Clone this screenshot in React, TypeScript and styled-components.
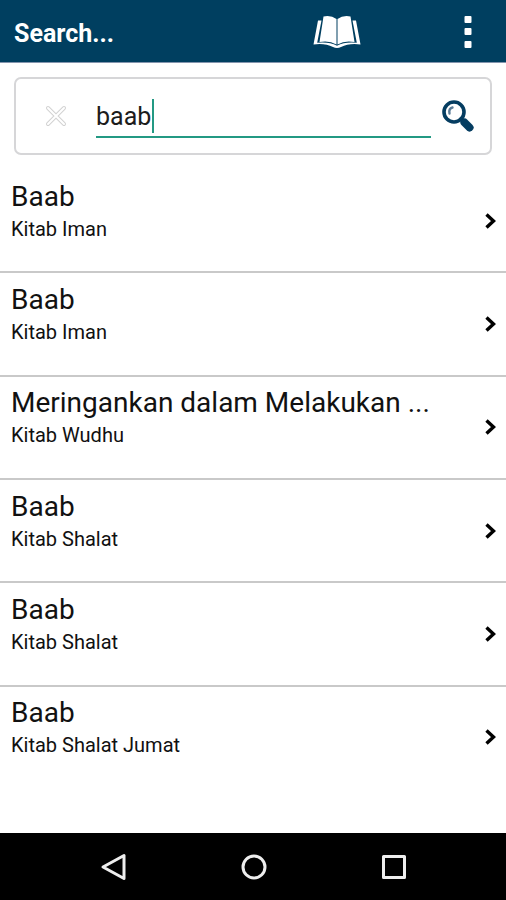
import React, { useState } from "react";
import styled, { createGlobalStyle } from "styled-components";

const GlobalStyle = createGlobalStyle`
  * { box-sizing: border-box; }
  body {
    margin: 0;
    background: #ffffff;
    color: #111111;
    font-family: Roboto, "Liberation Sans", sans-serif;
  }
  button { border: 0; padding: 0; background: none; font: inherit; color: inherit; cursor: pointer; }
  svg { display: block; }
`;

const Screen = styled.div`
  display: flex;
  flex-direction: column;
  min-height: 100vh;
`;

const AppBar = styled.header`
  display: flex;
  align-items: center;
  height: 63px;
  padding: 2px 34px 0 14px;
  background: #003f60;
  border-bottom: 1px solid #8495ae;
  color: #ffffff;
`;

const Title = styled.h1`
  flex: 1;
  margin: 0;
  padding-top: 4px;
  font-size: 25px;
  line-height: 32px;
  font-weight: 700;
`;

const BarActions = styled.div`
  display: flex;
  align-items: center;
  gap: 103px;
`;

const IconButton = styled.button`
  display: grid;
  place-items: center;
  flex: none;
`;

const SearchBox = styled.form`
  display: flex;
  align-items: center;
  height: 78px;
  margin: 14px 14px 15px;
  padding: 0 16px 0 29px;
  border: 2px solid #d6d6d8;
  border-radius: 7px;
`;

const Field = styled.label`
  position: relative;
  flex: 1;
  min-width: 0;
  margin: 1px 11px 0 29px;
`;

const SearchInput = styled.input`
  display: block;
  width: 100%;
  height: 42px;
  padding: 2px 0 0;
  border: 0;
  border-bottom: 2px solid #239983;
  border-radius: 0;
  outline: 0;
  background: transparent;
  color: #1c1c1c;
  caret-color: transparent;
  font: 400 25px/36px Roboto, "Liberation Sans", sans-serif;
`;

const Caret = styled.span`
  position: absolute;
  top: 3px;
  left: 56px;
  width: 2px;
  height: 34px;
  background: #239983;
`;

const Results = styled.ul`
  flex: 1;
  display: flex;
  flex-direction: column;
  margin: 0;
  padding: 0 0 43px;
  list-style: none;
`;

const ResultItem = styled.li`
  flex: 1;
  display: flex;
  border-bottom: 2px solid #c9c9c9;
  &:last-child { border-bottom-color: transparent; }
`;

const ResultButton = styled.button`
  flex: 1;
  display: flex;
  align-items: center;
  min-width: 0;
  padding: 0 10px 0 11px;
  text-align: left;
`;

const ResultText = styled.span`
  flex: 1;
  min-width: 0;
  padding-bottom: 20px;
`;

const ResultTitle = styled.span`
  display: block;
  overflow: hidden;
  font-size: 28px;
  line-height: 36px;
  white-space: nowrap;
  text-overflow: ellipsis;
`;

const ResultSource = styled.span`
  display: block;
  font-size: 20px;
  line-height: 28px;
`;

const NavBar = styled.nav`
  display: grid;
  grid-template-columns: repeat(3, 140px);
  justify-content: center;
  height: 67px;
  padding-left: 1px;
  background: #000000;
  color: #eeeeee;
`;

const BookIcon = () => (
  <svg width="48" height="34" viewBox="0 0 48 34" fill="#fff" aria-hidden="true">
    <path d="M10.5 1.5 Q18 0 23.5 4 L23.5 29.5 Q16 25 6.5 27 Z" />
    <path d="M37.5 1.5 Q30 0 24.5 4 L24.5 29.5 Q32 25 41.5 27 Z" />
    <path d="M8.5 5.5 L5 5.5 L0.5 29.5 Q12 28 20 32 Q24 34 28 32 Q36 28 47.5 29.5 L43 5.5 L39.5 5.5 L43.8 27.8 Q32 26.5 24 30.8 Q16 26.5 4.2 27.8 Z" />
  </svg>
);

const MoreIcon = () => (
  <svg width="8" height="34" viewBox="0 0 8 34" fill="#fff" aria-hidden="true">
    <rect x="0.5" y="1" width="7" height="7" rx="1" />
    <rect x="0.5" y="13" width="7" height="7" rx="1" />
    <rect x="0.5" y="26" width="7" height="7" rx="1" />
  </svg>
);

const ClearIcon = () => (
  <svg width="22" height="22" viewBox="0 0 22 22" fill="none" strokeLinecap="round" aria-hidden="true">
    <path d="M3 3 19 19M19 3 3 19" stroke="#d2d2d2" strokeWidth="4" />
    <path d="M3 3 19 19M19 3 3 19" stroke="#fff" strokeWidth="2" />
  </svg>
);

const SearchIcon = () => (
  <svg width="32" height="32" viewBox="0 0 32 32" fill="none" strokeLinecap="round" aria-hidden="true">
    <circle cx="12" cy="12" r="10" stroke="#053d61" strokeWidth="3.6" />
    <path d="m19 19 3 3" stroke="#053d61" strokeWidth="4" />
    <path d="m22.5 22.5 5 5" stroke="#053d61" strokeWidth="8" />
    <path d="M7.5 13.5 Q6.5 8.5 10.5 7.5" stroke="#5c7d98" strokeWidth="2.4" />
  </svg>
);

const ChevronIcon = () => (
  <svg width="11" height="16" viewBox="0 0 11 16" fill="none" stroke="#000" strokeWidth="3.4" aria-hidden="true">
    <path d="m1.5 1.5 7 6.5-7 6.5" />
  </svg>
);

const BackIcon = () => (
  <svg width="28" height="28" viewBox="0 0 28 28" fill="none" stroke="currentColor" strokeWidth="3" strokeLinejoin="round" aria-hidden="true">
    <path d="M24 2.5v23L3 14Z" />
  </svg>
);

const HomeIcon = () => (
  <svg width="28" height="28" viewBox="0 0 28 28" fill="none" stroke="currentColor" strokeWidth="3" aria-hidden="true">
    <circle cx="14" cy="14" r="11" />
  </svg>
);

const RecentIcon = () => (
  <svg width="28" height="28" viewBox="0 0 28 28" fill="none" stroke="currentColor" strokeWidth="3" strokeLinejoin="round" aria-hidden="true">
    <rect x="3.5" y="3.5" width="21" height="21" />
  </svg>
);

const results = [
  { title: "Baab", source: "Kitab Iman" },
  { title: "Baab", source: "Kitab Iman" },
  { title: "Meringankan dalam Melakukan ...", source: "Kitab Wudhu" },
  { title: "Baab", source: "Kitab Shalat" },
  { title: "Baab", source: "Kitab Shalat" },
  { title: "Baab", source: "Kitab Shalat Jumat" },
];

export default function App() {
  const [query, setQuery] = useState("baab");
  return (
    <Screen>
      <GlobalStyle />
      <AppBar>
        <Title>Search...</Title>
        <BarActions>
          <IconButton aria-label="Books"><BookIcon /></IconButton>
          <IconButton aria-label="More options"><MoreIcon /></IconButton>
        </BarActions>
      </AppBar>
      <SearchBox onSubmit={(e) => e.preventDefault()}>
        <IconButton type="button" aria-label="Clear" onClick={() => setQuery("")}><ClearIcon /></IconButton>
        <Field>
          <SearchInput aria-label="Search text" value={query} onChange={(e) => setQuery(e.target.value)} />
          {query === "baab" && <Caret />}
        </Field>
        <IconButton type="submit" aria-label="Search"><SearchIcon /></IconButton>
      </SearchBox>
      <Results>
        {results.map((r, i) => (
          <ResultItem key={i}>
            <ResultButton>
              <ResultText>
                <ResultTitle>{r.title}</ResultTitle>
                <ResultSource>{r.source}</ResultSource>
              </ResultText>
              <ChevronIcon />
            </ResultButton>
          </ResultItem>
        ))}
      </Results>
      <NavBar>
        <IconButton aria-label="Back"><BackIcon /></IconButton>
        <IconButton aria-label="Home"><HomeIcon /></IconButton>
        <IconButton aria-label="Recent apps"><RecentIcon /></IconButton>
      </NavBar>
    </Screen>
  );
}
